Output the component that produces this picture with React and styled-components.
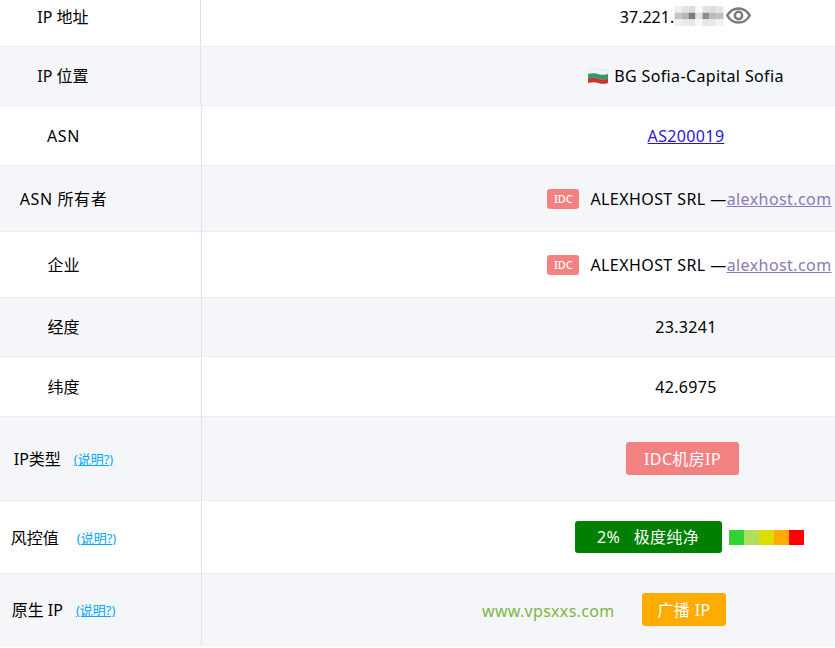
import React from "react";
import styled, { createGlobalStyle } from "styled-components";

const Global = createGlobalStyle`
  html, body { margin: 0; padding: 0; background: #fff; overflow: hidden; height: 648px; }
  body { font-family: "Noto Sans", "Noto Sans CJK SC", sans-serif; font-size: 16px; color: #000; }
`;

const Page = styled.div`
  position: relative;
  width: 1170px;
  height: 648px;
  overflow: hidden;
`;

const Row = styled.div`
  display: grid;
  grid-template-columns: ${(p) => (p.$narrow ? "201px" : "202px")} 1fr;
  height: ${(p) => p.$h}px;
  box-sizing: border-box;
  border-bottom: 1px solid #ebedf0;
  background: ${(p) => (p.$alt ? "#f5f6fa" : "#fff")};
`;

const Label = styled.div`
  display: flex;
  align-items: center;
  justify-content: center;
  box-sizing: border-box;
  padding-right: 74px;
  padding-top: ${(p) => p.$drop || 0}px;
  padding-bottom: ${(p) => p.$lift || 0}px;
  border-right: 1px solid #dfe1e6;
  white-space: pre;
  line-height: 22px;
  letter-spacing: ${(p) => p.$ls || 0}px;
`;

const Value = styled.div`
  display: flex;
  align-items: center;
  justify-content: center;
  white-space: pre;
  padding-bottom: ${(p) => p.$lift || 0}px;
  padding-left: ${(p) => p.$pl || 0}px;
  padding-right: ${(p) => p.$pr || 0}px;
  line-height: 22px;
  letter-spacing: ${(p) => p.$ls ?? 0.36}px;
`;

const Help = styled.a`
  font-size: 13px;
  letter-spacing: 0;
  color: #00aaff;
  text-decoration: underline;
  margin-left: ${(p) => p.$gap}px;
  margin-top: 1px;
`;

const Mosaic = styled.svg`
  display: block;
  width: 50px;
  height: 20px;
  margin-top: -2px;
  filter: blur(0.6px);
`;

const Eye = styled.svg`
  display: block;
  width: 25px;
  height: 25px;
  margin-left: 2px;
  margin-top: -3px;
`;

const Flag = styled.svg`
  display: block;
  width: 22px;
  height: 18px;
  margin-right: 5px;
`;

const AsnLink = styled.a`
  color: #2a12d8;
  text-decoration: underline;
`;

const SiteLink = styled.a`
  color: #8d79b8;
  text-decoration: underline;
`;

const IdcTag = styled.span`
  display: inline-flex;
  align-items: center;
  justify-content: center;
  width: 32px;
  height: 20px;
  border-radius: 3px;
  background: #f38181;
  color: #fff;
  font-size: 11px;
  font-weight: 500;
  letter-spacing: 0;
  margin-right: 11px;
`;

const Pill = styled.span`
  display: inline-flex;
  align-items: center;
  justify-content: center;
  box-sizing: border-box;
  width: ${(p) => p.$w}px;
  height: ${(p) => p.$h}px;
  border-radius: 3px;
  background: ${(p) => p.$bg};
  color: #fff;
  white-space: pre;
`;

const RiskBar = styled.span`
  display: flex;
  margin-left: 7px;
`;

const RiskCell = styled.span`
  display: block;
  width: 15px;
  height: 15px;
  background: ${(p) => p.$c};
`;

const Watermark = styled.div`
  position: absolute;
  left: 482px;
  top: 600px;
  font-size: 16px;
  line-height: 22px;
  letter-spacing: 0.3px;
  color: #7cb83f;
`;

const MOSAIC = [
  ["#f2eeea", "#dfe3e6", "#d9dcde", "#fbfbfb", "#e3e3e3", "#dedcd8", "#e4e7ea"],
  ["#c5c5c5", "#b6b4b5", "#7f7b7e", "#e4e4e4", "#8f8d90", "#b5bcc3", "#c0c0bc"],
  ["#f0f0f0", "#eaeaea", "#e8e8ec", "#f7f7f7", "#e6e6e6", "#eaeaea", "#f2f2f2"],
];

const RISK = ["#32d232", "#b0de5e", "#dedd00", "#ffab00", "#ff0000"];

export default function App() {
  return (
    <Page>
      <Global />
      <Row $h={47} $narrow>
        <Label $lift={12}>IP 地址</Label>
        <Value $lift={12} $ls={0}>
          37.221.
          <Mosaic viewBox="0 0 49 20">
            {MOSAIC.map((cells, r) =>
              cells.map((c, i) => (
                <rect key={`${r}-${i}`} x={i * 7} y={r * 6.67} width="7" height="6.67" fill={c} />
              ))
            )}
          </Mosaic>
          <Eye viewBox="0 0 24 24" fill="none" stroke="#7a7a7a" strokeWidth="2.400">
            <path d="M1.200 12C3.800 7.400 7.500 5.200 12 5.200s8.200 2.200 10.800 6.800c-2.600 4.600-6.300 6.800-10.800 6.800S3.800 16.600 1.200 12z" />
            <circle cx="12" cy="12" r="3.500" />
          </Eye>
        </Value>
      </Row>
      <Row $h={59} $alt $narrow>
        <Label>IP 位置</Label>
        <Value>
          <Flag viewBox="0 0 22 18">
            <path d="M1 2.500c4-1.500 7-1 10 0s6 1 10 0v4.500c-4 1.300-7 1-10 0s-6-1-10 0z" fill="#f4f4f4" stroke="#dcdcdc" strokeWidth="0.500" />
            <path d="M1 7c4-1 7-1 10 0s6 1.300 10 0v4.500c-4 1.300-7 1-10 0s-6-1-10 0z" fill="#2e9a6e" />
            <path d="M1 11.500c4-1 7-1 10 0s6 1.300 10 0V16c-4 1.300-7 1-10 0s-6-1-10 0z" fill="#cf3327" />
          </Flag>
          BG Sofia-Capital Sofia
        </Value>
      </Row>
      <Row $h={60}>
        <Label $ls={0.6}>ASN</Label>
        <Value><AsnLink>AS200019</AsnLink></Value>
      </Row>
      <Row $h={66} $alt>
        <Label $ls={0.6}>ASN 所有者</Label>
        <Value $pl={7} $ls={0.42}>
          <IdcTag>IDC</IdcTag>ALEXHOST SRL —<SiteLink>alexhost.com</SiteLink>
        </Value>
      </Row>
      <Row $h={66}>
        <Label>企业</Label>
        <Value $pl={7} $ls={0.42}>
          <IdcTag>IDC</IdcTag>ALEXHOST SRL —<SiteLink>alexhost.com</SiteLink>
        </Value>
      </Row>
      <Row $h={59} $alt>
        <Label>经度</Label>
        <Value>23.3241</Value>
      </Row>
      <Row $h={60}>
        <Label>纬度</Label>
        <Value>42.6975</Value>
      </Row>
      <Row $h={84} $alt>
        <Label>IP类型<Help $gap={13}>(说明?)</Help></Label>
        <Value $pr={7}><Pill $bg="#f38181" $w={113} $h={33}>IDC机房IP</Pill></Value>
      </Row>
      <Row $h={73}>
        <Label $drop={1}>风控值<Help $gap={18}>(说明?)</Help></Label>
        <Value $pl={6}>
          <Pill $bg="#008000" $w={147} $h={32}>2%   极度纯净</Pill>
          <RiskBar>
            {RISK.map((c) => <RiskCell key={c} $c={c} />)}
          </RiskBar>
        </Value>
      </Row>
      <Row $h={72} $alt>
        <Label>原生 IP<Help $gap={13}>(说明?)</Help></Label>
        <Value $pr={4}><Pill $bg="#ffab00" $w={84} $h={33}>广播 IP</Pill></Value>
      </Row>
      <Row $h={40} />
      <Watermark>www.vpsxxs.com</Watermark>
    </Page>
  );
}
